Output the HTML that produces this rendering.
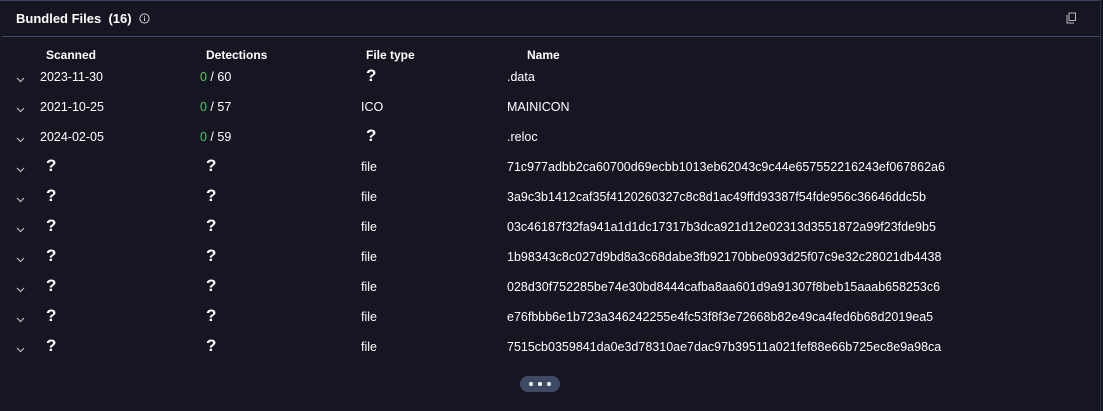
<!DOCTYPE html>
<html><head><style>
body{margin:0;width:1103px;height:411px;background:#161622;font-family:"Liberation Sans",sans-serif;color:#fff;overflow:hidden;position:relative}
.top{position:absolute;left:0;top:0;width:1101px;height:1px;background:#3b4460}
.rb{position:absolute;right:2px;top:0;width:1px;height:411px;background:#2a3045}
.hdiv{position:absolute;left:2px;top:36px;width:1099px;height:1px;background:#3b4a68}
.title{position:absolute;left:16px;top:11px;font-size:13px;font-weight:bold}
.t{position:absolute;font-size:12.5px;white-space:nowrap}
.h{position:absolute;top:48px;font-size:12px;font-weight:bold}
.q{position:absolute;font-size:17px;font-weight:bold}
.g{color:#4cc764}
.pill{position:absolute;left:520px;top:376px;width:40px;height:16px;border-radius:8px;background:#3e4a66}
.pill i{position:absolute;top:6px;width:4px;height:4px;border-radius:2px;background:#fff}
</style></head><body>
<div class="top"></div><div class="rb"></div><div class="hdiv"></div>
<div class="title">Bundled Files&nbsp; (16)</div>
<svg style="position:absolute;left:139px;top:13px" width="11" height="11" viewBox="0 0 11 11"><circle cx="5.5" cy="5.5" r="4.6" fill="none" stroke="#ccc" stroke-width="1"/><rect x="5" y="4.5" width="1" height="3.5" fill="#ccc"/><rect x="5" y="2.8" width="1" height="1" fill="#ccc"/></svg>
<svg style="position:absolute;left:1066px;top:12px" width="11" height="12" viewBox="0 0 11 12"><rect x="3" y="1" width="6.5" height="7.5" fill="none" stroke="#bbb" stroke-width="1"/><path d="M1 3v8h7" fill="none" stroke="#bbb" stroke-width="1"/></svg>
<div class="h" style="left:46px">Scanned</div>
<div class="h" style="left:206px">Detections</div>
<div class="h" style="left:366px">File type</div>
<div class="h" style="left:527px">Name</div>
<div id="rows"></div>
<div class="pill"><i style="left:9px"></i><i style="left:18px"></i><i style="left:27px"></i></div>
<script>
var r=[["2023-11-30","60","?",".data"],["2021-10-25","57","ICO","MAINICON"],["2024-02-05","59","?",".reloc"],
[0,0,"file","71c977adbb2ca60700d69ecbb1013eb62043c9c44e657552216243ef067862a6"],
[0,0,"file","3a9c3b1412caf35f4120260327c8c8d1ac49ffd93387f54fde956c36646ddc5b"],
[0,0,"file","03c46187f32fa941a1d1dc17317b3dca921d12e02313d3551872a99f23fde9b5"],
[0,0,"file","1b98343c8c027d9bd8a3c68dabe3fb92170bbe093d25f07c9e32c28021db4438"],
[0,0,"file","028d30f752285be74e30bd8444cafba8aa601d9a91307f8beb15aaab658253c6"],
[0,0,"file","e76fbbb6e1b723a346242255e4fc53f8f3e72668b82e49ca4fed6b68d2019ea5"],
[0,0,"file","7515cb0359841da0e3d78310ae7dac97b39511a021fef88e66b725ec8e9a98ca"]];
var h="";
r.forEach(function(x,i){var y=77+30*i;var ty=y-7;
h+='<svg style="position:absolute;left:16px;top:'+(y-0)+'px" width="9" height="6"><path d="M1 1l3.5 3.5L8 1" fill="none" stroke="#bbb" stroke-width="1.2"/></svg>';
if(x[0]){h+='<div class="t" style="left:40px;top:'+ty+'px">'+x[0]+'</div><div class="t" style="left:200px;top:'+ty+'px"><span class="g">0</span> / '+x[1]+'</div>';}
else{h+='<div class="q" style="left:46px;top:'+(y-11)+'px">?</div><div class="q" style="left:206px;top:'+(y-11)+'px">?</div>';}
if(x[2]=="?")h+='<div class="q" style="left:366px;top:'+(y-11)+'px">?</div>';
else h+='<div class="t" style="left:361px;top:'+ty+'px">'+x[2]+'</div>';
h+='<div class="t" style="left:507px;top:'+ty+'px">'+x[3]+'</div>';});
document.getElementById("rows").innerHTML=h;
</script>
</body></html>
